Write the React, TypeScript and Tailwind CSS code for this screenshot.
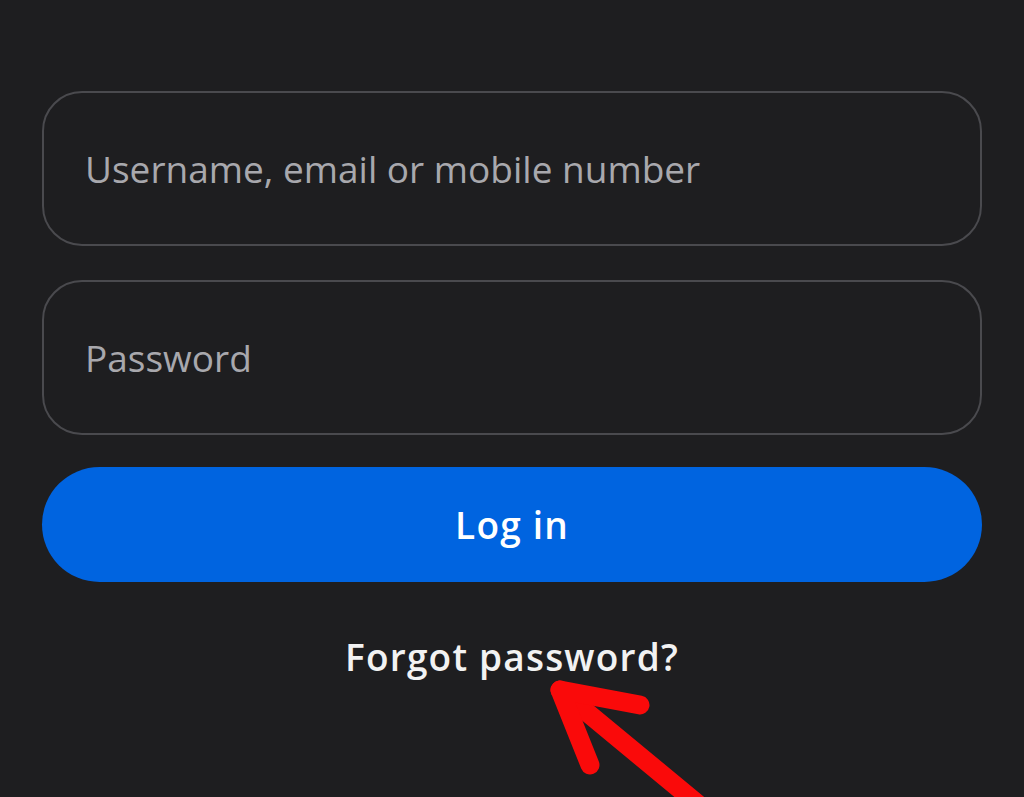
export default function App() {
  return (
    <div
      className="relative h-[797px] w-full overflow-hidden bg-[#1e1e20] px-[42px] pt-[91px]"
      style={{ fontFamily: "'Open Sans', 'Noto Sans', sans-serif" }}
    >
      <div className="flex flex-col">
        <div className="flex h-[155px] items-center rounded-[40px] border-2 border-[#4a4a4e] px-[41px] pt-[1px]">
          <span className="text-[37px] text-[#a8a8ad]">Username, email or mobile number</span>
        </div>
        <div className="mt-[34px] flex h-[155px] items-center rounded-[40px] border-2 border-[#4a4a4e] px-[41px] pt-[1px]">
          <span className="text-[37px] text-[#a8a8ad]">Password</span>
        </div>
        <button className="mt-[32px] flex h-[115px] items-center justify-center rounded-full bg-[#0064e0] text-[37px] font-semibold tracking-[1.2px] text-white">
          Log in
        </button>
        <div className="mt-[47px] text-center text-[37px] font-semibold tracking-[1.2px] text-[#f2f2f2]">
          Forgot password?
        </div>
      </div>

      {/* red annotation arrow */}
      <svg className="absolute left-0 top-0" width="1024" height="797" viewBox="0 0 1024 797">
        <g stroke="#fa0a0a" strokeWidth="19" strokeLinecap="round" strokeLinejoin="round" fill="none">
          <path d="M560 690 L705 810" />
          <path d="M590 765 L560 690 L640 705" />
        </g>
      </svg>
    </div>
  )
}
